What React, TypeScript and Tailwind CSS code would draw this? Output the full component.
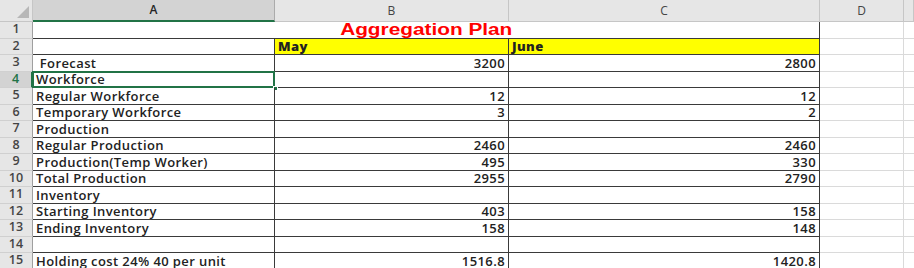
import React from 'react'

type Row = { label: string; may?: string; june?: string; head?: boolean }

const rows: Row[] = [
  { label: '' },
  { label: '', may: 'May', june: 'June', head: true },
  { label: ' Forecast', may: '3200', june: '2800' },
  { label: 'Workforce' },
  { label: 'Regular Workforce', may: '12', june: '12' },
  { label: 'Temporary Workforce', may: '3', june: '2' },
  { label: 'Production' },
  { label: 'Regular Production', may: '2460', june: '2460' },
  { label: 'Production(Temp Worker)', may: '495', june: '330' },
  { label: 'Total Production', may: '2955', june: '2790' },
  { label: 'Inventory' },
  { label: 'Starting Inventory', may: '403', june: '158' },
  { label: 'Ending Inventory', may: '158', june: '148' },
  { label: '' },
  { label: 'Holding cost 24% 40 per unit', may: '1516.8', june: '1420.8' },
]

const base = "font-['Open_Sans',sans-serif] text-[13px] leading-none text-[#222] tracking-[0.4px] whitespace-pre"
const normal = `${base} font-semibold`
const bold = `${base} font-extrabold text-[#111]`

const App = () => {
  return (
    <div className='w-[914px] h-[268px] overflow-hidden bg-white'>
      <div className='grid grid-cols-[33px_242px_234px_311px_84px_1fr] grid-rows-[22px_repeat(15,16.5px)]'>
        {/* column headers */}
        <div className='relative bg-[#e6e6e6] border-r border-b border-[#c6c6c6]'>
          <div className='absolute right-[3px] bottom-[3px] w-0 h-0 border-l-[12px] border-l-transparent border-b-[12px] border-b-[#b7b7b7]' />
        </div>
        <div className='flex items-center justify-center bg-[#d3d3d3] border-r border-[#ababab] border-b-2 border-b-[#217346] font-["Open_Sans",sans-serif] font-semibold text-[12px] text-[#262626]'>A</div>
        {['B', 'C', 'D', ''].map((c) => (
          <div key={c} className='flex items-center justify-center bg-[#e6e6e6] border-r border-b border-[#c6c6c6] font-["Open_Sans",sans-serif] text-[12px] text-[#444]'>{c}</div>
        ))}

        {rows.map((r, i) => {
          const n = i + 1
          const sel = n === 4
          return (
            <React.Fragment key={n}>
              <div className={`flex items-center justify-center font-['Open_Sans',sans-serif] font-semibold text-[12.5px] border-b border-[#d0d0d0] ${sel ? 'bg-[#d3d3d3] text-[#217346] border-r-2 border-r-[#217346]' : 'bg-[#e6e6e6] text-[#444] border-r border-r-[#9f9f9f]'}`}>
                {n}
              </div>
              {n === 1 ? (
                <div className='col-span-3 flex items-end justify-center border-b border-r border-[#3a3a3a]'>
                  <span className="inline-block scale-x-[1.3] font-['Liberation_Sans',sans-serif] font-bold text-[16px] leading-[17px] text-[#ff0000]">
                    Aggregation Plan
                  </span>
                </div>
              ) : (
                <>
                  <div className={`relative flex items-end pl-[3px] pb-[1px] border-b border-r border-[#3a3a3a] ${normal}`}>
                    {r.label}
                    {sel && (
                      <>
                        <div className='absolute -left-[1px] -top-[1px] -right-[1px] -bottom-[1px] border-2 border-[#217346]' />
                        <div className='absolute -right-[4px] -bottom-[4px] w-[5px] h-[5px] bg-[#217346] border border-white' />
                      </>
                    )}
                  </div>
                  <div className={`flex items-end pb-[1px] border-b border-r border-[#3a3a3a] ${r.head ? `bg-[#ffff00] justify-start pl-[3px] ${bold}` : `justify-end pr-[3px] ${normal}`}`}>
                    {r.may}
                  </div>
                  <div className={`flex items-end pb-[1px] border-b border-r border-[#3a3a3a] ${r.head ? `bg-[#ffff00] justify-start pl-[3px] ${bold}` : `justify-end pr-[3px] ${normal}`}`}>
                    {r.june}
                  </div>
                </>
              )}
              <div className='border-b border-r border-[#dadada]' />
              <div className='border-b border-[#dadada]' />
            </React.Fragment>
          )
        })}
      </div>
    </div>
  )
}

export default App
